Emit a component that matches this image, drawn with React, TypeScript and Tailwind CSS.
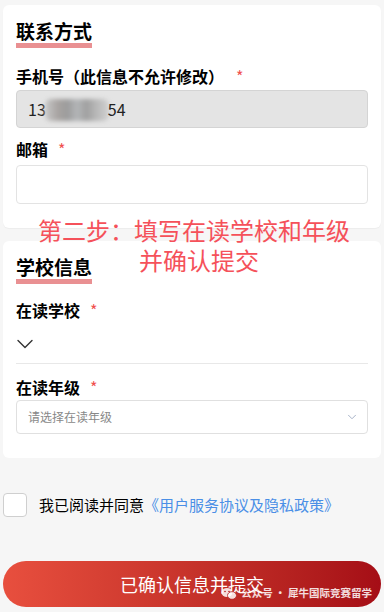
import { ChevronDown } from "lucide-react";

const font = { fontFamily: '"Noto Sans CJK SC", "Noto Sans", sans-serif' };

function SectionTitle({ text }: { text: string }) {
  return (
    <div className="inline-flex flex-col">
      <h2 className="text-[19px] leading-[20px] font-bold text-black">{text}</h2>
      <div className="h-[5px] bg-[#e99092] mt-[2px]" />
    </div>
  );
}

function Label({ text }: { text: string }) {
  return (
    <div className="flex items-center h-[20px] text-[16px] leading-[20px] font-bold text-black">
      <span>{text}</span>
      <span className="ml-[10px] text-[#f0504f] font-normal">*</span>
    </div>
  );
}

export default function App() {
  return (
    <div className="relative w-[384px] h-[612px] overflow-hidden bg-[#f6f6f6]" style={font}>
      <div className="px-[3px] pt-[5px] flex flex-col gap-[13px]">
        {/* 联系方式 */}
        <div className="bg-white rounded-[6px] px-[13px] pt-[15px] pb-[24px] shadow-[0_1px_1px_rgba(0,0,0,0.04)]">
          <SectionTitle text="联系方式" />
          <div className="mt-[18px] flex items-center h-[20px] text-[16px] leading-[20px] font-bold text-black">
            <span>手机号（此信息不允许修改）</span>
            <span className="ml-[12px] text-[#f0504f] font-normal">*</span>
          </div>
          <div className="relative mt-[4px] h-[38px] rounded-[4px] border border-[#d4d4d4] bg-[#e4e4e4] flex items-center pl-[11px] text-[16px] text-[#222]">
            <span>13</span>
            <span className="inline-block w-[62px]" />
            <span className="relative z-10">54</span>
            <span className="absolute left-[28px] top-[8px] w-[64px] h-[22px] rounded-[6px] bg-[linear-gradient(90deg,#c8c8c8_0%,#a8a4a2_20%,#9c9c9c_35%,#b4b6b8_50%,#a0a0a0_65%,#b8b8b8_80%,#d0d0d0_100%)] blur-[2px]" />
          </div>
          <div className="mt-[11px]">
            <Label text="邮箱" />
          </div>
          <div className="mt-[6px] h-[39px] rounded-[4px] border border-[#e3e3e3] bg-white" />
        </div>

        {/* 学校信息 */}
        <div className="bg-white rounded-[6px] px-[13px] pt-[15px] pb-[24px]">
          <SectionTitle text="学校信息" />
          <div className="mt-[16px]">
            <Label text="在读学校" />
          </div>
          <div className="h-[44px] border-b border-[#e8e8e8] flex items-start">
            <ChevronDown className="w-[28px] h-[28px] text-[#333] ml-[-5px] mt-[10px]" strokeWidth={1.2} />
          </div>
          <div className="mt-[13px]">
            <Label text="在读年级" />
          </div>
          <div className="mt-[3px] h-[34px] rounded-[4px] border border-[#e0e0e0] bg-white flex items-center justify-between pl-[11px] pr-[8px]">
            <span className="text-[12px] text-[#888]">请选择在读年级</span>
            <ChevronDown className="w-[14px] h-[14px] text-[#9aa7c0]" strokeWidth={1.5} />
          </div>
        </div>
      </div>

      {/* 协议 */}
      <div className="mt-[35px] px-[3px] flex items-center">
        <div className="w-[24px] h-[24px] rounded-[4px] border border-[#cfcfcf] bg-white" />
        <span className="ml-[12px] text-[15px] leading-[20px] text-black">我已阅读并同意</span>
        <span className="text-[15px] leading-[20px] text-[#4a8fe6]">《用户服务协议及隐私政策》</span>
      </div>

      {/* 提交 */}
      <div className="mt-[44px] px-[3px]">
        <button className="w-full h-[46px] rounded-full bg-gradient-to-r from-[#e84f3e] to-[#a50d16] text-white text-[18px] leading-[24px] flex items-center justify-center">
          已确认信息并提交
        </button>
      </div>

      {/* 水印 */}
      <div className="absolute right-[12px] top-[586px] flex items-center gap-[4px] text-[10.5px] leading-[14px] font-bold text-white/85">
        <svg width="16" height="13" viewBox="0 0 16 13" fill="none">
          <ellipse cx="6" cy="5.5" rx="5.5" ry="4.6" fill="rgba(255,255,255,0.85)" />
          <ellipse cx="11" cy="8.5" rx="4.5" ry="3.8" fill="rgba(255,255,255,0.85)" stroke="#b31b1e" strokeWidth="0.8" />
          <circle cx="4" cy="4.5" r="0.8" fill="#b31b1e" />
          <circle cx="8" cy="4.5" r="0.8" fill="#b31b1e" />
        </svg>
        <span>公众号 · 犀牛国际竞赛留学</span>
      </div>

      {/* 标注 */}
      <div className="absolute left-0 right-0 top-[215px] flex flex-col items-center text-[#f5515a] text-[24px] leading-[30px] pointer-events-none">
        <span className="ml-[4px]">第二步：填写在读学校和年级</span>
        <span className="ml-[14px]">并确认提交</span>
      </div>
    </div>
  );
}
